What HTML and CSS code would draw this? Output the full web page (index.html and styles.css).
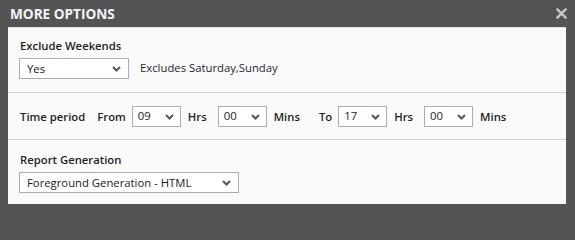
FILE: index.html
```html
<!DOCTYPE html>
<html>
<head>
<meta charset="utf-8">
<link rel="stylesheet" href="styles.css">
</head>
<body>
<div class="dialog">
  <div class="titlebar">
    <span class="title">MORE OPTIONS</span>
    <svg class="close" width="11" height="11" viewBox="0 0 11 11"><path d="M1.5 1.5 L9.5 9.5 M9.5 1.5 L1.5 9.5" stroke="#c8c8c8" stroke-width="2.4" stroke-linecap="square"/></svg>
  </div>
  <div class="panel">
    <div class="section s1">
      <div class="label">Exclude Weekends</div>
      <div class="row">
        <div class="select w-yes"><span>Yes</span><svg class="chev" width="9" height="6" viewBox="0 0 9 6"><path d="M1 1 L4.5 4.5 L8 1" fill="none" stroke="#555" stroke-width="2"/></svg></div>
        <span class="note">Excludes Saturday,Sunday</span>
      </div>
    </div>
    <div class="section s2">
      <div class="row">
        <span class="label">Time period</span>
        <span class="label from">From</span>
        <div class="select small"><span>09</span><svg class="chev" width="9" height="6" viewBox="0 0 9 6"><path d="M1 1 L4.5 4.5 L8 1" fill="none" stroke="#555" stroke-width="2"/></svg></div>
        <span class="label unit">Hrs</span>
        <div class="select small gap-l"><span>00</span><svg class="chev" width="9" height="6" viewBox="0 0 9 6"><path d="M1 1 L4.5 4.5 L8 1" fill="none" stroke="#555" stroke-width="2"/></svg></div>
        <span class="label unit">Mins</span>
        <span class="label to">To</span>
        <div class="select small"><span>17</span><svg class="chev" width="9" height="6" viewBox="0 0 9 6"><path d="M1 1 L4.5 4.5 L8 1" fill="none" stroke="#555" stroke-width="2"/></svg></div>
        <span class="label unit">Hrs</span>
        <div class="select small gap-l"><span>00</span><svg class="chev" width="9" height="6" viewBox="0 0 9 6"><path d="M1 1 L4.5 4.5 L8 1" fill="none" stroke="#555" stroke-width="2"/></svg></div>
        <span class="label unit">Mins</span>
      </div>
    </div>
    <div class="section s3">
      <div class="label">Report Generation</div>
      <div class="select w-report"><span>Foreground Generation - HTML</span><svg class="chev" width="9" height="6" viewBox="0 0 9 6"><path d="M1 1 L4.5 4.5 L8 1" fill="none" stroke="#555" stroke-width="2"/></svg></div>
    </div>
  </div>
</div>
</body>
</html>
```
FILE: styles.css
```css
html, body {
  margin: 0;
  padding: 0;
  background: #545454;
  font-family: "Open Sans", "DejaVu Sans", sans-serif;
  font-size: 11.3px;
  color: #222;
}
.dialog {
  width: 575px;
  height: 213px;
  box-sizing: border-box;
  padding: 0 9px 9px 8px;
  display: flex;
  flex-direction: column;
}
.titlebar {
  height: 27px;
  display: flex;
  align-items: center;
  justify-content: space-between;
  padding-left: 2px;
  margin-right: -1px;
}
.title {
  color: #f2f4f8;
  font-weight: 700;
  font-size: 13.6px;
  margin-top: -1px;
}
.close {
  margin-top: -1px;
}
.panel {
  flex: 1;
  background: #fafafa;
  border-top: 1px solid #e4e4e4;
  display: flex;
  flex-direction: column;
}
.section {
  padding-left: 11px;
  border-bottom: 1px solid #d3d3d6;
}
.section:last-child {
  border-bottom: none;
  flex: 1;
}
.s1 {
  height: 65px;
  box-sizing: border-box;
  padding-top: 9px;
}
.s2 {
  height: 47px;
  box-sizing: border-box;
  display: flex;
  align-items: center;
}
.s3 {
  padding-top: 11px;
}
.label {
  font-weight: 600;
  line-height: 17px;
  color: #1f1f1f;
}
.s1 .label, .s3 .label {
  padding-left: 1px;
  margin-bottom: 4px;
}
.s2 .label:first-child {
  padding-left: 1px;
}
.row {
  display: flex;
  align-items: center;
}
.select {
  box-sizing: border-box;
  height: 21px;
  border: 1px solid #a9adb8;
  background: #fff;
  display: flex;
  align-items: center;
  justify-content: space-between;
  padding: 0 7px 0 7px;
  color: #1a1a2a;
  line-height: 19px;
}
.select span {
  margin-top: -1px;
}
.w-yes { width: 110px; }
.w-report { width: 220px; }
.select.small {
  width: 49px;
  padding: 0 6px 0 5px;
}
.chev { flex: none; margin-top: 1px; }
.note {
  margin-left: 11px;
  color: #2a2233;
  margin-top: -2px;
}
.from { margin-left: 12px; margin-right: 6px; }
.unit { margin-left: 7px; }
.gap-l { margin-left: 11px; }
.to { margin-left: 19px; margin-right: 6px; }
```
